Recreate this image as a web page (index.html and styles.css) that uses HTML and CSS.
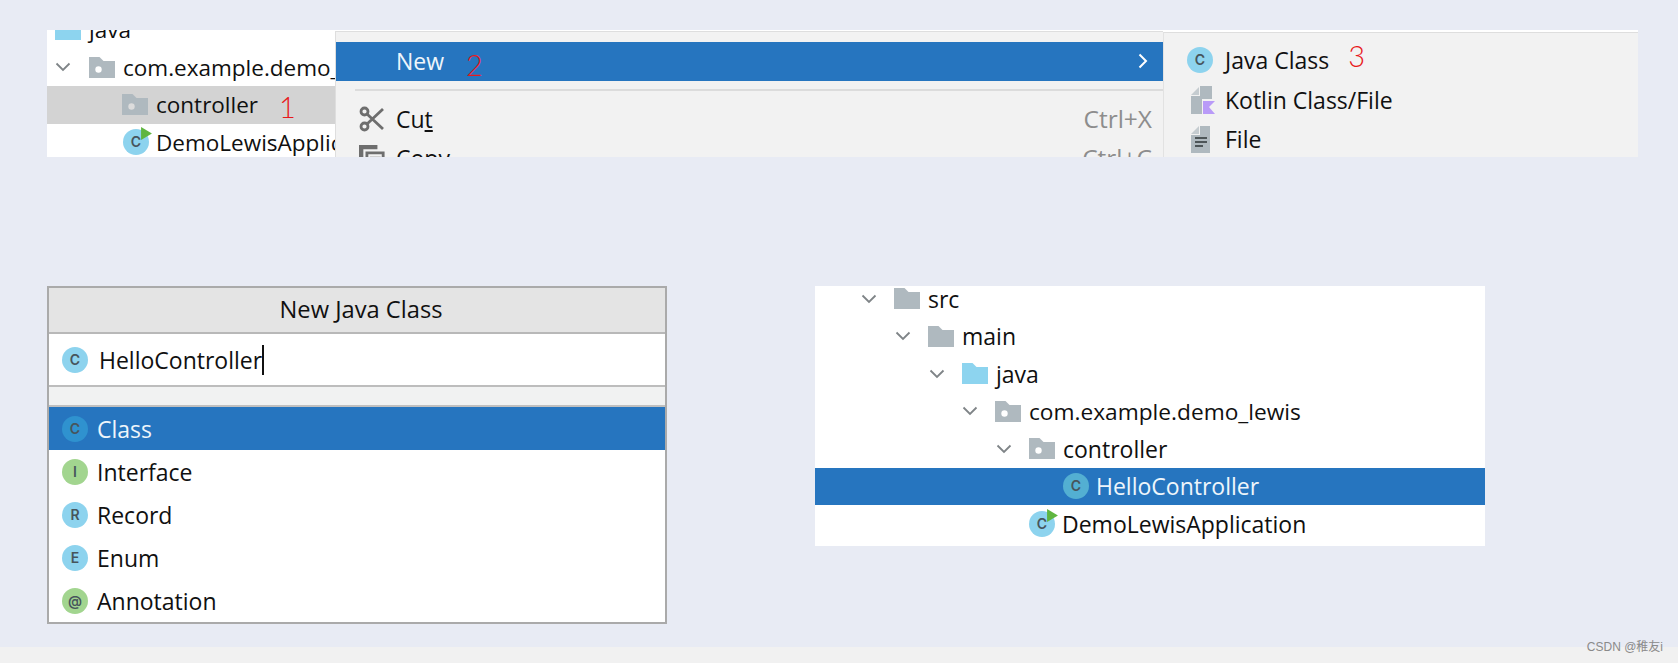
FILE: index.html
```html
<!DOCTYPE html>
<html lang="en">
<head>
<meta charset="utf-8">
<title>New Java Class</title>
<link rel="stylesheet" href="styles.css">
</head>
<body>
<svg class="defs" width="0" height="0" aria-hidden="true">
  <defs>
    <symbol id="chev" viewBox="0 0 16 10"><path d="M1.5 1.5 8 8l6.5-6.5" fill="none" stroke="#7f8487" stroke-width="1.8"/></symbol>
    <symbol id="folder" viewBox="0 0 26 21"><path d="M0 0h10.500l4 4H26v17H0z" fill="#afb9bf"/></symbol>
    <symbol id="folder-blue" viewBox="0 0 26 21"><path d="M0 0h10.500l4 4H26v17H0z" fill="#8dd4ef"/></symbol>
    <symbol id="pkg" viewBox="0 0 26 21"><path d="M0 0h10.500l4 4H26v17H0z" fill="#afb9bf"/><circle cx="9.500" cy="12.500" r="3.200" fill="#fff"/></symbol>
    <symbol id="pkg-grey" viewBox="0 0 26 21"><path d="M0 0h10.500l4 4H26v17H0z" fill="#afb9bf"/><circle cx="9.500" cy="12.500" r="3.200" fill="#dcdcdc"/></symbol>
    <symbol id="scissors" viewBox="0 0 26 26"><g fill="none" stroke="#6e6e6e" stroke-width="2.800"><circle cx="5.500" cy="5.500" r="3.500"/><circle cx="5.500" cy="20.500" r="3.500"/><path d="M8 8 24 23M8 18 24 3"/></g></symbol>
    <symbol id="copy" viewBox="0 0 24 24"><path d="M0 0h17v4H4v15H0z" fill="#6e6e6e"/><path d="M7.300 7.300h15v15.400h-15z" fill="none" stroke="#6e6e6e" stroke-width="2.600"/><path d="M10 12h10M10 16h10" stroke="#6e6e6e" stroke-width="2.400"/></symbol>
    <symbol id="kotlin" viewBox="0 0 24 28"><path d="M0 9 8 1v8z" fill="#c5ccd0"/><path d="M0 10h9V0h12v13H11v15H0z" fill="#afb9bf"/><path d="M12 15h12l-6 6 6 7H12z" fill="#b99bf8"/></symbol>
    <symbol id="file" viewBox="0 0 20 27"><path d="M0 8 8 0v8z" fill="#c5ccd0"/><path d="M0 9h9V0h10v27H0z" fill="#afb9bf"/><path d="M4 12h12M4 16h12M4 20h8" stroke="#4d5558" stroke-width="1.800"/></symbol>
  </defs>
</svg>

<section class="strip">
  <div class="tree tree-cut">
    <div class="row row-java"><svg class="fd"><use href="#folder-blue"/></svg><span>java</span></div>
    <div class="row row-com"><svg class="ch"><use href="#chev"/></svg><svg class="fd"><use href="#pkg"/></svg><span>com.example.demo_lewis</span></div>
    <div class="row row-ctrl row-grey"><svg class="fd"><use href="#pkg-grey"/></svg><span>controller</span><b class="mark mark-1">1</b></div>
    <div class="row row-app"><span class="ic ic-run">C<svg class="run" viewBox="0 0 10 12"><path d="M0 0l10 6-10 6z" fill="#5fb540"/></svg></span><span>DemoLewisApplication</span></div>
  </div>
  <div class="menu">
    <div class="menu-row menu-on"><span class="menu-label">New</span><b class="mark mark-2">2</b><svg class="arrow" viewBox="0 0 10 16"><path d="M1.500 1.500 8 8l-6.500 6.500" fill="none" stroke="#fff" stroke-width="2"/></svg></div>
    <div class="menu-sep"></div>
    <div class="menu-row menu-cut"><svg class="mi"><use href="#scissors"/></svg><span class="menu-label">Cu<u>t</u></span><span class="sc">Ctrl+X</span></div>
    <div class="menu-row"><svg class="mi"><use href="#copy"/></svg><span class="menu-label">Copy</span><span class="sc">Ctrl+C</span></div>
  </div>
  <div class="submenu">
    <div class="sub-row"><span class="sub-ic"><span class="ic">C</span></span><span>Java Class</span><b class="mark mark-3">3</b></div>
    <div class="sub-row"><span class="sub-ic"><svg class="kt"><use href="#kotlin"/></svg></span><span>Kotlin Class/File</span></div>
    <div class="sub-row"><span class="sub-ic"><svg class="fl"><use href="#file"/></svg></span><span>File</span></div>
  </div>
</section>

<main class="lower">
  <section class="dialog">
    <header class="dlg-title">New Java Class</header>
    <div class="dlg-input"><span class="ic">C</span><span class="typed">HelloController</span></div>
    <div class="dlg-gap"></div>
    <ul class="dlg-list">
      <li class="opt opt-on"><span class="ic ic-sel">C</span>Class</li>
      <li class="opt"><span class="ic ic-green">I</span>Interface</li>
      <li class="opt"><span class="ic">R</span>Record</li>
      <li class="opt"><span class="ic">E</span>Enum</li>
      <li class="opt"><span class="ic ic-green">@</span>Annotation</li>
    </ul>
  </section>

  <section class="tree tree-full">
    <div class="row lv0"><svg class="ch"><use href="#chev"/></svg><svg class="fd"><use href="#folder"/></svg><span>src</span></div>
    <div class="row lv1"><svg class="ch"><use href="#chev"/></svg><svg class="fd"><use href="#folder"/></svg><span>main</span></div>
    <div class="row lv2"><svg class="ch"><use href="#chev"/></svg><svg class="fd"><use href="#folder-blue"/></svg><span>java</span></div>
    <div class="row lv3"><svg class="ch"><use href="#chev"/></svg><svg class="fd"><use href="#pkg"/></svg><span>com.example.demo_lewis</span></div>
    <div class="row lv4"><svg class="ch"><use href="#chev"/></svg><svg class="fd"><use href="#pkg"/></svg><span>controller</span></div>
    <div class="row lv5 row-sel"><span class="ic ic-tsel">C</span><span>HelloController</span></div>
    <div class="row lv6"><span class="ic ic-run">C<svg class="run" viewBox="0 0 10 12"><path d="M0 0l10 6-10 6z" fill="#5fb540"/></svg></span><span>DemoLewisApplication</span></div>
  </section>
</main>

<footer class="foot"><span class="wm">CSDN @稚友i</span></footer>
</body>
</html>
```
FILE: styles.css
```css
* { box-sizing: border-box; }
html, body { margin: 0; height: 663px; overflow: hidden; }
body {
  background: #e8ebf4;
  font-family: "Open Sans", "Noto Sans", "Liberation Sans", sans-serif;
  font-size: 23px;
  color: #101010;
  display: flex;
  flex-direction: column;
}
.defs { position: absolute; }
.strip {
  margin: 30px 40px 0 47px;
  height: 127px;
  display: flex;
  overflow: hidden;
  background: #fff;
  flex: none;
}
.tree-cut { width: 288px; flex: none; margin-top: -19px; font-size: 22.500px; }
.row { height: 37.500px; display: flex; align-items: center; white-space: nowrap; overflow: visible; }
.ch { width: 16px; height: 10px; flex: none; }
.fd { width: 26px; height: 21px; flex: none; }
.row .fd + span { margin-left: 8px; }
.row-java { padding-left: 8px; }
.row-com { padding-left: 8px; }
.row-com .fd { margin-left: 18px; }
.row-ctrl { padding-left: 75px; }
.row-grey { background: #d3d3d3; }
.row-app { padding-left: 76px; }
.row-app .ic + span { margin-left: 7px; }

.ic {
  position: relative;
  width: 26px;
  height: 26px;
  flex: none;
  border-radius: 50%;
  background: #8dd3ee;
  color: #47555c;
  font: 600 14px/26px "Inter", "Liberation Sans", sans-serif;
  text-align: center;
  display: inline-block;
}
.ic-green { background: #a2d58f; }
.ic-sel { background: #2f92cf; }
.ic-tsel { background: #53afd2; }
.run { position: absolute; right: -3px; top: -2px; width: 11px; height: 13px; }

.mark { font-family: "Lato", "Noto Sans", sans-serif; font-weight: 300; color: #e8191c; font-size: 29px; line-height: 1; }
.mark-1 { margin-left: 21px; margin-top: 4px; }
.mark-2 { margin-left: 22px; margin-top: 8px; }
.mark-3 { margin-left: 19px; margin-top: -10px; }

.menu {
  width: 828px;
  flex: none;
  background: #f2f2f2;
  border-top: 1px solid #dedede;
  border-left: 1px solid #dedede;
  margin-top: 1px;
  padding-top: 10px;
}
.menu-row { height: 39px; display: flex; align-items: center; position: relative; padding: 0 11px 0 60px; }
.menu-on { background: #2675bf; color: #eef5fb; padding-bottom: 2px; }
.menu-label { flex: none; }
.menu-sep { height: 2px; margin: 8px 0 8px 19px; background: #dcdcdc; }
.menu-cut { margin-top: 6px; }
.mi { position: absolute; left: 23px; width: 26px; height: 26px; }
.sc { margin-left: auto; color: #8d8d8d; font-size: 24.500px; }
.arrow { margin-left: auto; width: 10px; height: 16px; margin-right: 4px; }

.submenu {
  flex: 1;
  background: #f2f2f2;
  border-left: 1px solid #e2e2e2;
  border-top: 1px solid #dedede;
  margin-top: 2px;
  padding: 7.500px 0 0 23px;
}
.sub-row { height: 39.500px; display: flex; align-items: center; }
.sub-ic { width: 38px; display: flex; justify-content: flex-start; flex: none; }
.kt { width: 24px; height: 28px; margin-left: 4px; }
.fl { width: 20px; height: 27px; margin-left: 4px; }

.lower {
  display: flex;
  align-items: flex-start;
  padding: 129px 193px 0 47px;
  flex: none;
}
.dialog {
  width: 620px;
  height: 338px;
  background: #fff;
  border: 2px solid #aaa;
  flex: none;
  display: flex;
  flex-direction: column;
}
.dlg-title {
  height: 46px;
  flex: none;
  background: #e4e4e4;
  border-bottom: 2px solid #b8b8b8;
  text-align: center;
  line-height: 42px;
  font-size: 23.700px;
  padding-left: 8px;
}
.dlg-input {
  height: 53px;
  flex: none;
  display: flex;
  align-items: center;
  padding-left: 13px;
  border-bottom: 2px solid #bdbdbd;
}
.typed { margin-left: 11px; border-right: 2px solid #111; line-height: 30px; }
.dlg-gap { height: 20px; flex: none; background: #f1f2f2; border-bottom: 2px solid #c0c0c0; }
.dlg-list { list-style: none; margin: 0; padding: 0; }
.opt { height: 43px; display: flex; align-items: center; padding-left: 13px; }
.opt .ic { margin-right: 9px; }
.opt-on { background: #2675bf; color: #eef5fb; }

.tree-full {
  width: 670px;
  height: 260px;
  flex: none;
  margin-left: 148px;
  background: #fff;
  overflow: hidden;
}
.lv0 { padding-left: 46px; margin-top: -6px; }
.lv1 { padding-left: 80px; }
.lv2 { padding-left: 114px; }
.lv3 { padding-left: 147px; font-size: 22.700px; }
.lv4 { padding-left: 181px; }
.tree-full .fd { margin-left: 17px; }
.lv5 { padding-left: 248px; }
.lv6 { padding-left: 214px; }
.lv5 .ic + span, .lv6 .ic + span { margin-left: 7px; }
.row-sel { background: #2675bf; color: #eef5fb; }

.foot {
  margin-top: auto;
  height: 16px;
  background: #f1f1f1;
  position: relative;
  flex: none;
}
.wm {
  position: absolute;
  right: 15px;
  top: -8px;
  font: 12px/16px "Liberation Sans", "Noto Sans CJK SC", sans-serif;
  color: #8a8a8a;
}
```
